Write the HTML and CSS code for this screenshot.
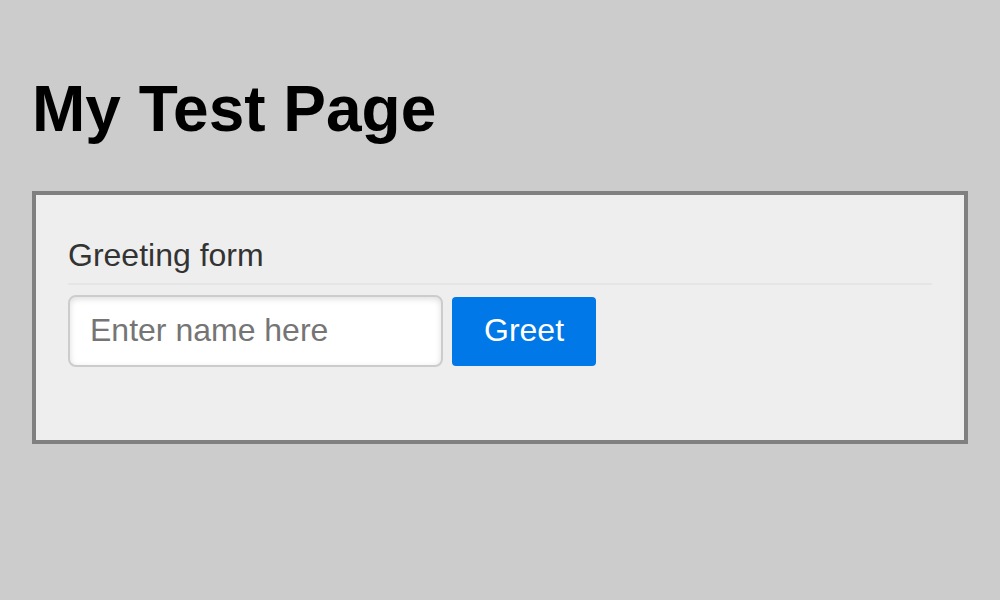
FILE: index.html
```html
<!DOCTYPE html>
<html lang="en">
<head>
<meta charset="utf-8">
<title>My Test Page</title>
<link rel="stylesheet" href="styles.css">
</head>
<body>
<h1 class="title">My Test Page</h1>
<div class="box">
  <form class="form">
    <div class="legend">Greeting form</div>
    <div class="row">
      <input class="name" type="text" placeholder="Enter name here">
      <button class="greet" type="button">Greet</button>
    </div>
  </form>
</div>
</body>
</html>
```
FILE: styles.css
```css
html, body {
  margin: 0;
  padding: 0;
}
body {
  background: #cccccc;
  font-family: "Liberation Sans", Arial, Helvetica, sans-serif;
  padding: 0 32px;
  width: 1000px;
  height: 600px;
  box-sizing: border-box;
  overflow: hidden;
}
.title {
  font-size: 64px;
  font-weight: bold;
  line-height: 74px;
  margin: 72px 0 45px 0;
  color: #000;
}
.box {
  border: 4px solid #808080;
  background: #eeeeee;
  padding: 32px 32px 0 32px;
}
.form {
  margin: 0;
}
.legend {
  font-size: 32px;
  line-height: 36px;
  color: #333333;
  margin-top: 10px;
  padding-bottom: 10px;
  border-bottom: 2px solid #e5e5e5;
}
.row {
  display: flex;
  align-items: flex-start;
  gap: 9px;
  margin-top: 10px;
  padding-bottom: 73px;
}
.name {
  width: 375px;
  box-sizing: border-box;
  font-family: "Liberation Sans", Arial, Helvetica, sans-serif;
  font-size: 32px;
  line-height: 36px;
  padding: 15px 20px 17px 20px;
  border: 2px solid #cccccc;
  border-radius: 8px;
  box-shadow: inset 0 2px 6px #dddddd;
  background: #ffffff;
  color: #333;
  margin: 0;
  outline: none;
}
.name::placeholder {
  color: #757575;
}
.greet {
  font-family: "Liberation Sans", Arial, Helvetica, sans-serif;
  font-size: 32px;
  line-height: 36px;
  padding: 15px 32px 18px 32px;
  margin: 2px 0 0 0;
  border: none;
  border-radius: 4px;
  background: #0078e7;
  color: #ffffff;
  cursor: pointer;
}
```
